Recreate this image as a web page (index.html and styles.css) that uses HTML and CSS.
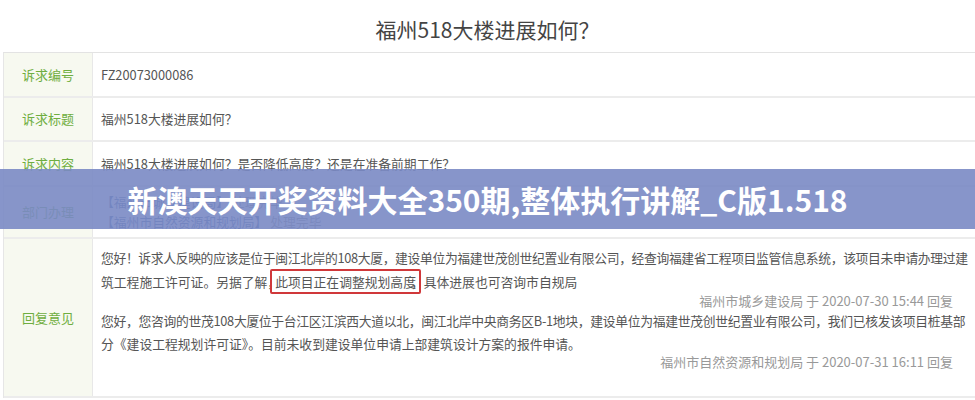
FILE: index.html
```html
<!DOCTYPE html>
<html lang="zh-CN">
<head>
<meta charset="utf-8">
<title>福州518大楼进展如何？</title>
<link rel="stylesheet" href="styles.css">
</head>
<body>
<div class="page">
  <h1 class="title">福州518大楼进展如何？</h1>
  <div class="sheet">
    <div class="row r1">
      <div class="label">诉求编号</div>
      <div class="cell">FZ20073000086</div>
    </div>
    <div class="row r2">
      <div class="label">诉求标题</div>
      <div class="cell">福州518大楼进展如何？</div>
    </div>
    <div class="row r3">
      <div class="label">诉求内容</div>
      <div class="cell">福州518大楼进展如何？是否降低高度？还是在准备前期工作？</div>
    </div>
    <div class="row r4">
      <div class="label">部门办理</div>
      <div class="cell dept">
        <div><span class="org">【福州市城乡建设局】</span> <span class="done">处理完毕</span></div>
        <div><span class="org">【福州市自然资源和规划局】</span> <span class="done">处理完毕</span></div>
      </div>
    </div>
    <div class="row r5">
      <div class="label">回复意见</div>
      <div class="cell reply">
        <p class="p1"><span class="tight">您好！诉求人反映的应该是位于闽江北岸的108大厦，建设单位为福建世茂创世纪置业有限公司，经查询福建省工程项目监管信息系统，该项目未申请办理过建</span><br>筑工程施工许可证。另据了解，<span class="mark">此项目正在调整规划高度</span>，具体进展也可咨询市自规局</p>
        <div class="sign">福州市城乡建设局 于 2020-07-30 15:44 回复</div>
        <p class="p2"><span class="tight2">您好，您咨询的世茂108大厦位于台江区江滨西大道以北，闽江北岸中央商务区B-1地块，建设单位为福建世茂创世纪置业有限公司，我们已核发该项目桩基部</span><br>分《建设工程规划许可证》。目前未收到建设单位申请上部建筑设计方案的报件申请。</p>
        <div class="sign">福州市自然资源和规划局 于 2020-07-31 16:11 回复</div>
      </div>
    </div>
  </div>
  <div class="banner">新澳天天开奖资料大全350期,整体执行讲解_C版1.518</div>
</div>
</body>
</html>
```

FILE: styles.css
```css
* { box-sizing: border-box; }
html, body { margin: 0; padding: 0; background: #fff; }
body {
  font-family: "Noto Sans CJK SC", "Noto Sans", sans-serif;
  color: #555;
  width: 975px;
  height: 400px;
  overflow: hidden;
}
.page { position: relative; width: 975px; height: 400px; overflow: hidden; }
.title {
  margin: 0;
  height: 52px;
  padding-top: 15px;
  font-size: 21px;
  line-height: 29px;
  font-weight: normal;
  color: #444;
  text-align: center;
}
.sheet {
  margin-left: 3px;
  width: 980px;
  border-top: 1px solid #e3e3e3;
  border-left: 1px solid #e6e6e6;
}
.row {
  display: grid;
  grid-template-columns: 89px minmax(0, 1fr);
  border-bottom: 2px solid #ececec;
}
.r1, .r2, .r3 { height: 44.5px; }
.r4 { height: 52.5px; }
.r5 { height: 159px; }
.label {
  background: #f7f9f0;
  border-right: 1px solid #e8e8e8;
  color: #6fae40;
  font-size: 13px;
  display: flex;
  align-items: center;
  justify-content: center;
}
.cell {
  padding-left: 8px;
  font-size: 12.8px;
  color: #555;
  display: flex;
  align-items: center;
  white-space: nowrap;
  overflow: hidden;
}
.dept {
  flex-direction: column;
  align-items: flex-start;
  justify-content: center;
  line-height: 20px;
}
.org { color: #3a5c96; }
.done { color: #888; }
.reply {
  display: block;
  padding-top: 7px;
  padding-right: 8px;
}
.reply p { margin: 0; }
.p1 { line-height: 24px; }
.p2 { line-height: 23px; margin-top: 1px !important; }
.tight { letter-spacing: -0.35px; }
.tight2 { letter-spacing: -0.3px; }
.sign {
  text-align: right;
  padding-right: 22px;
  color: #999;
  font-size: 13px;
  line-height: 14px;
  height: 14px;
}
.mark {
  border: 2px solid #d0383a;
  border-radius: 2px;
  padding: 1px 3px 1px 3px;
  margin-left: -10px;
  margin-right: -10px;
}
.banner {
  position: absolute;
  left: 0;
  top: 169px;
  width: 975px;
  height: 60px;
  background: rgba(122, 138, 196, 0.9);
  color: #fff;
  font-weight: bold;
  font-size: 30px;
  line-height: 60px;
  text-align: center;
  white-space: nowrap;
}
```
